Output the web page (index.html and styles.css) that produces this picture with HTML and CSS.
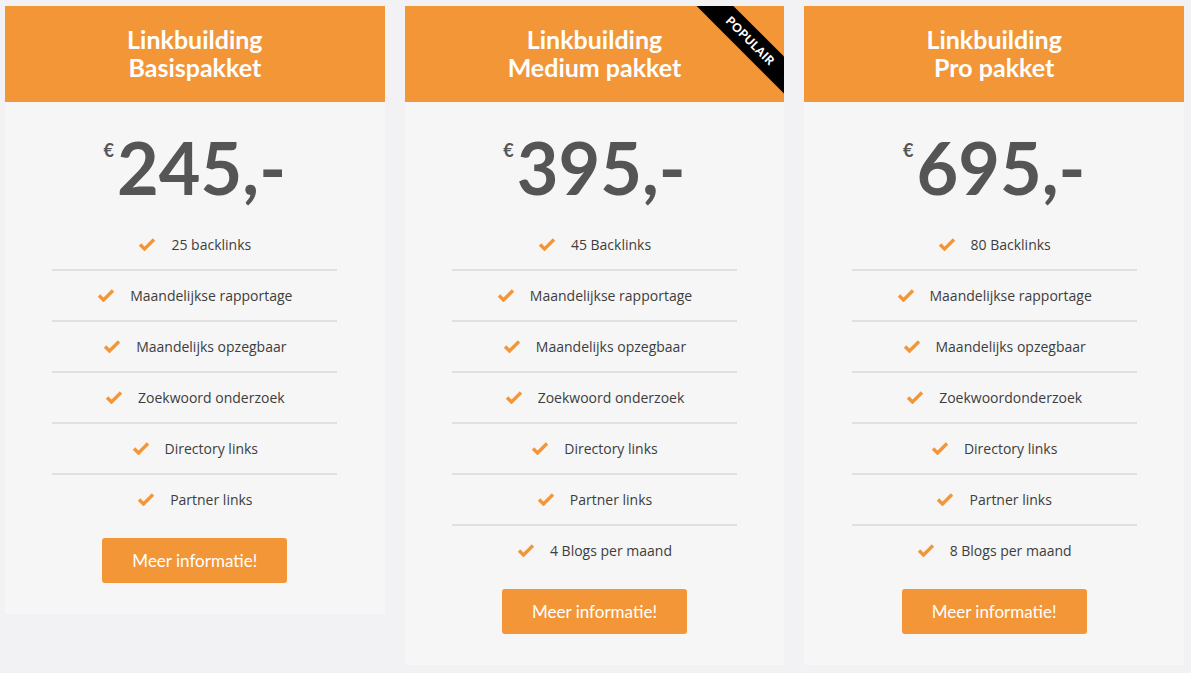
FILE: index.html
```html
<!DOCTYPE html>
<html lang="nl">
<head>
<meta charset="utf-8">
<title>Linkbuilding pakketten</title>
<link rel="stylesheet" href="styles.css">
</head>
<body>
<main class="pricing">
  <section class="card">
    <header class="card-head">
      <h2 class="card-title">Linkbuilding<br>Basispakket</h2>
    </header>
    <div class="price"><span class="currency">€</span><span class="amount">245,-</span></div>
    <ul class="features">
      <li><svg class="check" viewBox="0 0 18 13"><polyline points="2,6.5 6.5,11 16,1.5"/></svg><span>25 backlinks</span></li>
      <li><svg class="check" viewBox="0 0 18 13"><polyline points="2,6.5 6.5,11 16,1.5"/></svg><span>Maandelijkse rapportage</span></li>
      <li><svg class="check" viewBox="0 0 18 13"><polyline points="2,6.5 6.5,11 16,1.5"/></svg><span>Maandelijks opzegbaar</span></li>
      <li><svg class="check" viewBox="0 0 18 13"><polyline points="2,6.5 6.5,11 16,1.5"/></svg><span>Zoekwoord onderzoek</span></li>
      <li><svg class="check" viewBox="0 0 18 13"><polyline points="2,6.5 6.5,11 16,1.5"/></svg><span>Directory links</span></li>
      <li><svg class="check" viewBox="0 0 18 13"><polyline points="2,6.5 6.5,11 16,1.5"/></svg><span>Partner links</span></li>
    </ul>
    <a class="btn" href="#">Meer informatie!</a>
  </section>

  <section class="card">
    <header class="card-head">
      <h2 class="card-title">Linkbuilding<br>Medium pakket</h2>
      <div class="ribbon">POPULAIR</div>
    </header>
    <div class="price"><span class="currency">€</span><span class="amount">395,-</span></div>
    <ul class="features">
      <li><svg class="check" viewBox="0 0 18 13"><polyline points="2,6.5 6.5,11 16,1.5"/></svg><span>45 Backlinks</span></li>
      <li><svg class="check" viewBox="0 0 18 13"><polyline points="2,6.5 6.5,11 16,1.5"/></svg><span>Maandelijkse rapportage</span></li>
      <li><svg class="check" viewBox="0 0 18 13"><polyline points="2,6.5 6.5,11 16,1.5"/></svg><span>Maandelijks opzegbaar</span></li>
      <li><svg class="check" viewBox="0 0 18 13"><polyline points="2,6.5 6.5,11 16,1.5"/></svg><span>Zoekwoord onderzoek</span></li>
      <li><svg class="check" viewBox="0 0 18 13"><polyline points="2,6.5 6.5,11 16,1.5"/></svg><span>Directory links</span></li>
      <li><svg class="check" viewBox="0 0 18 13"><polyline points="2,6.5 6.5,11 16,1.5"/></svg><span>Partner links</span></li>
      <li><svg class="check" viewBox="0 0 18 13"><polyline points="2,6.5 6.5,11 16,1.5"/></svg><span>4 Blogs per maand</span></li>
    </ul>
    <a class="btn" href="#">Meer informatie!</a>
  </section>

  <section class="card">
    <header class="card-head">
      <h2 class="card-title">Linkbuilding<br>Pro pakket</h2>
    </header>
    <div class="price"><span class="currency">€</span><span class="amount">695,-</span></div>
    <ul class="features">
      <li><svg class="check" viewBox="0 0 18 13"><polyline points="2,6.5 6.5,11 16,1.5"/></svg><span>80 Backlinks</span></li>
      <li><svg class="check" viewBox="0 0 18 13"><polyline points="2,6.5 6.5,11 16,1.5"/></svg><span>Maandelijkse rapportage</span></li>
      <li><svg class="check" viewBox="0 0 18 13"><polyline points="2,6.5 6.5,11 16,1.5"/></svg><span>Maandelijks opzegbaar</span></li>
      <li><svg class="check" viewBox="0 0 18 13"><polyline points="2,6.5 6.5,11 16,1.5"/></svg><span>Zoekwoordonderzoek</span></li>
      <li><svg class="check" viewBox="0 0 18 13"><polyline points="2,6.5 6.5,11 16,1.5"/></svg><span>Directory links</span></li>
      <li><svg class="check" viewBox="0 0 18 13"><polyline points="2,6.5 6.5,11 16,1.5"/></svg><span>Partner links</span></li>
      <li><svg class="check" viewBox="0 0 18 13"><polyline points="2,6.5 6.5,11 16,1.5"/></svg><span>8 Blogs per maand</span></li>
    </ul>
    <a class="btn" href="#">Meer informatie!</a>
  </section>
</main>
</body>
</html>
```

FILE: styles.css
```css
* { box-sizing: border-box; }

html, body {
  margin: 0;
  padding: 0;
  background: #f2f2f4;
}

body {
  font-family: "Open Sans", "Noto Sans", sans-serif;
  color: #3d3d3d;
}

.pricing {
  display: grid;
  grid-template-columns: repeat(3, 1fr);
  column-gap: 20px;
  align-items: start;
  padding: 6px 7px 0 5px;
}

.card {
  background: #f6f6f6;
  display: flex;
  flex-direction: column;
  align-items: center;
  padding-bottom: 31px;
}

.card-head {
  position: relative;
  overflow: hidden;
  width: 100%;
  height: 96px;
  background: #f39638;
  display: flex;
  align-items: center;
  justify-content: center;
}

.card-title {
  margin: 0 0 3px;
  color: #fff;
  font-family: "Lato", "Noto Sans", sans-serif;
  font-weight: 700;
  font-size: 25px;
  line-height: 28px;
  text-align: center;
}

.ribbon {
  position: absolute;
  top: 22px;
  left: 270px;
  width: 150px;
  height: 26px;
  background: #000;
  color: #fff;
  font-family: "Lato", "Noto Sans", sans-serif;
  font-weight: 900;
  font-size: 12px;
  line-height: 26px;
  letter-spacing: 0.4px;
  text-align: center;
  transform: rotate(45deg);
}

.price {
  display: flex;
  align-items: flex-start;
  justify-content: center;
  height: 118px;
  padding-top: 29px;
  color: #555;
  font-family: "Lato", "Noto Sans", sans-serif;
}

.currency {
  font-size: 18px;
  font-weight: 700;
  line-height: 1;
  margin-top: 10px;
  margin-right: 3px;
}

.amount {
  font-size: 72px;
  font-weight: 700;
  line-height: 72px;
}

.features {
  list-style: none;
  margin: 0;
  padding: 0;
  width: 285px;
}

.features li {
  display: flex;
  align-items: center;
  justify-content: center;
  gap: 15px;
  height: 51px;
  border-bottom: 2px solid #e0e0e0;
  font-size: 14px;
}

.features li:last-child {
  border-bottom: 0;
  height: 49px;
}

.check {
  width: 18px;
  height: 13px;
  flex: none;
}

.check polyline {
  fill: none;
  stroke: #f39638;
  stroke-width: 3.4;
  stroke-linecap: butt;
  stroke-linejoin: miter;
}

.btn {
  display: flex;
  align-items: center;
  justify-content: center;
  width: 185px;
  height: 45px;
  margin-top: 14px;
  background: #f39638;
  border-radius: 3px;
  color: #fff;
  text-decoration: none;
  font-family: "Lato", "Noto Sans", sans-serif;
  font-size: 17px;
}
```
